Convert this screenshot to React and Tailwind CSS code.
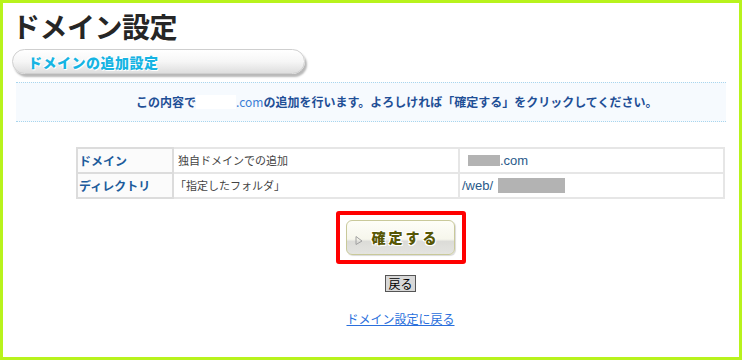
import React from "react";

const jp = { fontFamily: '"Noto Sans CJK JP", "Noto Sans", sans-serif' };

export default function App() {
  return (
    <div
      className="w-[742px] h-[360px] border-[3px] border-[#b8f31c] bg-white flex flex-col overflow-hidden"
      style={jp}
    >
      <h1 className="ml-[9px] mt-[6px] text-[28px] leading-[34px] font-bold text-[#262626] tracking-[-0.5px]">
        ドメイン設定
      </h1>
      <div className="ml-[9px] mt-[6px] w-[293px] h-[25px] rounded-full border border-[#cfcfcf] bg-gradient-to-b from-white via-[#f6f6f6] to-[#dedede] shadow-[2px_3px_2px_rgba(0,0,0,0.28)] flex items-center pl-[15px]">
        <span
          className="text-[14px] font-black text-[#16b4e3] tracking-[0.5px] leading-none"
          style={{ textShadow: "0 0 2px #fff, 1px 1px 0 #fff, -1px -1px 0 #fff" }}
        >
          ドメインの追加設定
        </span>
      </div>
      <div className="mx-[13px] mt-[8px] h-[40px] border-y border-dotted border-[#a9d6ee] bg-[#f6fafe] flex items-center pl-[120px]">
        <span className="text-[12px] font-bold text-[#1f4f96] leading-none flex items-center">
          この内容で
          <span className="inline-block w-[40px] h-[14px] bg-white" />
          <span className="text-[#3d7fd6] font-normal">.com</span>
          の追加を行います。よろしければ「確定する」をクリックしてください。
        </span>
      </div>
      <div className="ml-[73px] mr-[14px] mt-[25px] flex flex-col items-center">
        <table className="w-full border-collapse text-[11px] text-[#444]">
          <tbody>
            <tr className="h-[25px]">
              <td className="w-[96px] border-2 border-[#dcdcdc] pl-[1px] font-bold text-[12px] text-[#1d5c9c] bg-[#fbfbfb]">
                ドメイン
              </td>
              <td className="w-[286px] border-2 border-[#e6e6e6] pl-[4px]">独自ドメインでの追加</td>
              <td className="border-2 border-[#e6e6e6] pl-[8px] text-[13px] text-[#2a5a8a]">
                <span className="flex items-center" style={{ fontFamily: '"Liberation Sans", Arial, sans-serif' }}>
                  <span className="inline-block w-[32px] h-[11px] bg-[#b3b3b3]" />
                  .com
                </span>
              </td>
            </tr>
            <tr className="h-[25px]">
              <td className="border-2 border-[#dcdcdc] pl-[1px] font-bold text-[12px] text-[#1d5c9c] bg-[#fbfbfb]">
                ディレクトリ
              </td>
              <td className="border-2 border-[#e6e6e6] pl-[1px]">「指定したフォルダ」</td>
              <td className="border-2 border-[#e6e6e6] pl-[2px] text-[13px] text-[#2a5a8a]">
                <span className="flex items-center" style={{ fontFamily: '"Liberation Sans", Arial, sans-serif' }}>
                  /web/
                  <span className="inline-block ml-[5px] w-[67px] h-[15px] bg-[#b3b3b3]" />
                </span>
              </td>
            </tr>
          </tbody>
        </table>
        <div className="mt-[12px] w-[130px] h-[53px] border-[4px] border-[#ff0000] rounded-[3px] flex items-center justify-center">
          <button className="relative w-[109px] h-[35px] rounded-[6px] border border-[#c9c99a] bg-[linear-gradient(to_bottom,#fefef8_0%,#f6f6ec_55%,#dcdcd8_62%,#e4e4e0_100%)] flex items-center justify-center shadow-[1px_1px_1px_rgba(0,0,0,0.15)]">
            <svg className="absolute left-[8px] top-[15px]" width="8" height="9" viewBox="0 0 8 9">
              <path d="M1 0.5 L1 8.5 M1 0.5 L7 5 L1 8.5" fill="none" stroke="#a0a0a0" strokeWidth="1" />
            </svg>
            <span
              className="text-[14px] font-black text-[#575705] tracking-[3px] pl-[10px]"
              style={{ textShadow: "1px 1px 0 #fff, -1px -1px 0 #fff, 1px -1px 0 #fff, -1px 1px 0 #fff" }}
            >
              確定する
            </span>
          </button>
        </div>
        <button className="mt-[11px] h-[17px] px-[2px] border border-[#555] bg-[#d8d8d8] text-[12px] leading-none text-black">
          戻る
        </button>
        <a href="#" className="mt-[21px] text-[12px] text-[#2a6fdc] underline leading-none">
          ドメイン設定に戻る
        </a>
      </div>
    </div>
  );
}
